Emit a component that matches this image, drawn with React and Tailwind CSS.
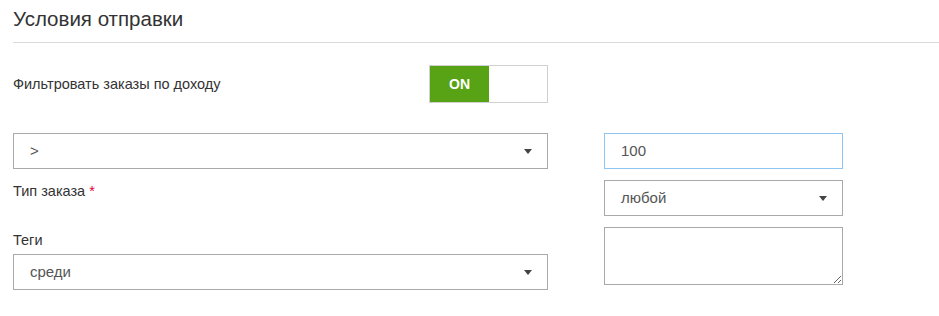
function Caret() {
  return (
    <svg width="8" height="5" viewBox="0 0 8 5" className="shrink-0">
      <path d="M0 0h8L4 5z" fill="#444" />
    </svg>
  );
}

function SelectBox({ value, className = "" }) {
  return (
    <div
      className={`flex h-[36px] items-center justify-between border border-[#a9a9a9] bg-white pl-[16px] pr-[15px] text-[15px] text-[#555] ${className}`}
    >
      <span>{value}</span>
      <Caret />
    </div>
  );
}

export default function App() {
  return (
    <div className="min-h-[316px] bg-white pl-[13px] font-['Liberation_Sans',Arial,sans-serif] text-[#333]">
      <h2 className="pt-[5px] text-[20.5px] leading-[28px] font-normal text-[#333]">
        Условия отправки
      </h2>
      <div className="mt-[9px] border-t border-[#d9d9d9]" />

      <div className="flex items-start">
        {/* left column */}
        <div className="w-[535px]">
          <div className="mt-[22px] flex items-center">
            <span className="w-[416px] text-[14.5px] leading-[18px]">
              Фильтровать заказы по доходу
            </span>
            <div className="flex h-[38px] w-[119px] border border-[#d0d0d0] bg-white">
              <div className="flex w-[59px] items-center justify-center bg-[#57a315] text-[14px] font-bold text-white">
                ON
              </div>
            </div>
          </div>

          <SelectBox value=">" className="mt-[30px]" />

          <div className="mt-[13px] text-[14.5px] leading-[18px]">
            Тип заказа <span className="text-[#e4003a]">*</span>
          </div>

          <div className="mt-[31px] text-[14.5px] leading-[18px]">Теги</div>

          <SelectBox value="среди" className="mt-[5px]" />
        </div>

        {/* right column */}
        <div className="ml-[56px] mt-[90px] flex w-[239px] flex-col gap-[11px]">
          <div className="flex h-[36px] items-center border border-[#8ec5f2] bg-white pl-[16px] text-[15px] text-[#555]">
            100
          </div>
          <SelectBox value="любой" />
          <textarea className="block h-[58px] w-full resize border border-[#a9a9a9] bg-white outline-none" />
        </div>
      </div>
    </div>
  );
}
